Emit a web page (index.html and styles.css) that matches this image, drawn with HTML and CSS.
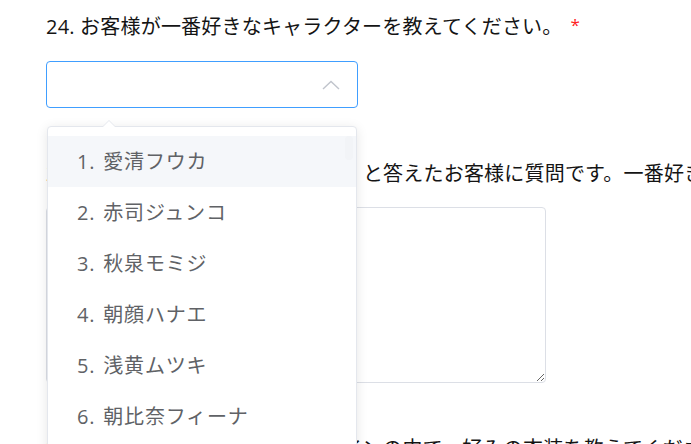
FILE: index.html
```html
<!DOCTYPE html>
<html lang="ja">
<head>
  <meta charset="UTF-8">
  <meta name="viewport" content="width=device-width, initial-scale=1.0">
  <title>アンケート</title>
  <link rel="stylesheet" href="styles.css">
</head>
<body>
  <div class="form">
    <div class="question">
      <div class="q-title">24. お客様が一番好きなキャラクターを教えてください。<span class="req">*</span></div>
      <div class="select-wrap">
        <div class="select">
          <input class="select-input" type="text" readonly>
          <svg class="select-arrow" width="18" height="10" viewBox="0 0 18 10">
            <polyline points="1,9 9,1.5 17,9" fill="none" stroke="#c0c4cc" stroke-width="1.4"/>
          </svg>
        </div>
        <div class="dropdown">
          <div class="dropdown-arrow"></div>
          <ul class="options">
            <li class="option hover">1. 愛清フウカ</li>
            <li class="option">2. 赤司ジュンコ</li>
            <li class="option">3. 秋泉モミジ</li>
            <li class="option">4. 朝顔ハナエ</li>
            <li class="option">5. 浅黄ムツキ</li>
            <li class="option">6. 朝比奈フィーナ</li>
            <li class="option">7. 阿慈谷ヒフミ</li>
          </ul>
          <div class="thumb"></div>
        </div>
      </div>
    </div>
    <div class="question">
      <div class="q-title">25. 前の質問で「愛清フウカ以外」と答えたお客様に質問です。一番好きなシーンを教えてください。</div>
      <textarea class="answer"></textarea>
    </div>
    <div class="question">
      <div class="q-title">26. 上記のキャラクターの各デザインの中で、好みの衣装を教えてください。</div>
    </div>
  </div>
</body>
</html>
```

FILE: styles.css
```css
body {
  margin: 0;
  background-color: white;
  font-family: "Open Sans", "Noto Sans CJK JP", sans-serif;
  overflow: hidden;
}
.form {
  padding: 12px 0 0 46px;
}
.question {
  margin-bottom: 51px;
}
.q-title {
  font-size: 20px;
  line-height: 30px;
  color: #141414;
  white-space: nowrap;
  margin-bottom: 18px;
  letter-spacing: 0.2px;
}
.req {
  color: #f22;
  font-size: 17px;
  margin-left: 8px;
  position: relative;
  top: -3px;
}
.select-wrap {
  position: relative;
  width: 312px;
}
.select {
  position: relative;
  height: 47px;
}
.select-input {
  box-sizing: border-box;
  width: 100%;
  height: 47px;
  border: 1px solid #409eff;
  border-radius: 4px;
  outline: none;
  padding: 0 40px 0 20px;
  font-size: 20px;
  background: white;
}
.select-arrow {
  position: absolute;
  right: 18px;
  top: 19px;
}
.dropdown {
  position: absolute;
  top: 65px;
  left: 1px;
  width: 310px;
  box-sizing: border-box;
  border: 1px solid #e4e7ed;
  border-radius: 4px;
  background: white;
  box-shadow: 0 2px 12px 0 rgba(0, 0, 0, 0.1);
  z-index: 10;
}
.dropdown-arrow {
  position: absolute;
  top: -7px;
  left: 54px;
  width: 0;
  height: 0;
  border-left: 7px solid transparent;
  border-right: 7px solid transparent;
  border-bottom: 7px solid #e4e7ed;
}
.dropdown-arrow::after {
  content: "";
  position: absolute;
  top: 1px;
  left: -6px;
  border-left: 6px solid transparent;
  border-right: 6px solid transparent;
  border-bottom: 6px solid white;
}
.options {
  list-style: none;
  margin: 0;
  padding: 9px 0;
}
.option {
  height: 51px;
  line-height: 51px;
  padding: 0 29px;
  font-size: 20px;
  letter-spacing: 0.8px;
  word-spacing: 2px;
  color: #606266;
  white-space: nowrap;
}
.option.hover {
  background-color: #f5f7fa;
}
.thumb {
  position: absolute;
  top: 9px;
  right: 3px;
  width: 8px;
  height: 24px;
  border-radius: 4px;
  background: rgba(144, 147, 153, 0.03);
}
.answer {
  display: block;
  box-sizing: border-box;
  width: 500px;
  height: 176px;
  border: 1px solid #dcdfe6;
  border-radius: 4px;
  outline: none;
  font-size: 20px;
  font-family: inherit;
  background: white;
}
```
